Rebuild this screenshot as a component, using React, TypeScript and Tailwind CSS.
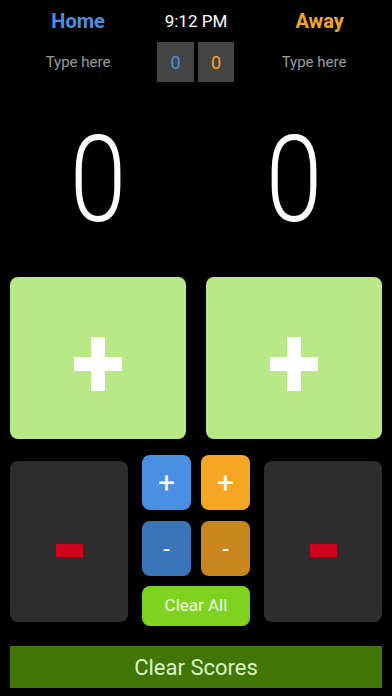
import React, { useState } from 'react';

const font = { fontFamily: 'Roboto, "Liberation Sans", sans-serif' };

function BigPlus() {
  return (
    <svg width="48" height="54" viewBox="0 0 48 54">
      <rect x="17" y="0" width="14" height="54" fill="#fff" />
      <rect x="0" y="20" width="48" height="14" fill="#fff" />
    </svg>
  );
}

export default function App() {
  const [home, setHome] = useState(0);
  const [away, setAway] = useState(0);

  return (
    <div className="w-[392px] h-[696px] bg-black text-white overflow-hidden" style={font}>
      {/* header */}
      <div className="grid grid-cols-[156px_80px_156px] h-[42px] items-center">
        <div className="text-center text-[21px] font-bold text-[#4a90e2] leading-none scale-x-95">Home</div>
        <div className="text-center text-[17px] leading-none">9:12 PM</div>
        <div className="text-center text-[21px] font-bold text-[#f5a623] leading-none pl-[12px] scale-x-95">Away</div>
      </div>
      <div className="grid grid-cols-[156px_80px_156px] h-[40px] items-center">
        <div className="text-center text-[15px] text-[#9b9b9b]">Type here</div>
        <div className="flex gap-[4px] pl-[1px] h-[40px]">
          <div className="w-[37px] h-full bg-[#444] flex items-center justify-center text-[18px] text-[#4a90e2]">{home}</div>
          <div className="w-[36px] h-full bg-[#444] flex items-center justify-center text-[18px] text-[#f5a623]">{away}</div>
        </div>
        <div className="text-center text-[15px] text-[#9b9b9b]">Type here</div>
      </div>

      {/* big scores */}
      <div className="flex h-[195px] px-[10px] gap-[20px] items-center">
        <div className="flex-1 text-center text-[120px] font-light leading-none scale-x-[0.85]">{home}</div>
        <div className="flex-1 text-center text-[120px] font-light leading-none scale-x-[0.85]">{away}</div>
      </div>

      {/* plus panels */}
      <div className="flex px-[10px] gap-[20px] h-[162px]">
        <button onClick={() => setHome(home + 1)} className="flex-1 rounded-lg bg-[#b8e986] flex items-center justify-center pt-[12px]">
          <BigPlus />
        </button>
        <button onClick={() => setAway(away + 1)} className="flex-1 rounded-lg bg-[#b8e986] flex items-center justify-center pt-[12px]">
          <BigPlus />
        </button>
      </div>

      {/* controls */}
      <div className="flex px-[10px] gap-[14px] mt-[16px] h-[172px]">
        <button onClick={() => setHome(Math.max(0, home - 1))} className="w-[118px] mt-[6px] h-[161px] rounded-lg bg-[#2d2d2d] flex items-center justify-center pt-[18px]">
          <div className="w-[27px] h-[13px] bg-[#d0021b]" />
        </button>
        <div className="w-[108px] flex flex-col">
          <div className="flex gap-[10px]">
            <button className="w-[49px] h-[55px] rounded-lg bg-[#4a90e2] text-[30px] leading-none">+</button>
            <button className="w-[49px] h-[55px] rounded-lg bg-[#f5a623] text-[30px] leading-none">+</button>
          </div>
          <div className="flex gap-[10px] mt-[11px]">
            <button className="w-[49px] h-[55px] rounded-lg bg-[#3a75b9] text-[24px] leading-none">-</button>
            <button className="w-[49px] h-[55px] rounded-lg bg-[#c9861e] text-[24px] leading-none">-</button>
          </div>
          <button
            onClick={() => { setHome(0); setAway(0); }}
            className="mt-[10px] h-[40px] rounded-lg bg-[#7ed321] text-[17px] text-[#f0fbe4]"
          >
            Clear All
          </button>
        </div>
        <button onClick={() => setAway(Math.max(0, away - 1))} className="w-[118px] mt-[6px] h-[161px] rounded-lg bg-[#2d2d2d] flex items-center justify-center pt-[18px]">
          <div className="w-[27px] h-[13px] bg-[#d0021b]" />
        </button>
      </div>

      <div className="px-[10px] mt-[19px]">
        <button
          onClick={() => { setHome(0); setAway(0); }}
          className="w-full h-[42px] bg-[#417505] text-[22px] text-[#dcf5c4]"
        >
          Clear Scores
        </button>
      </div>
    </div>
  );
}
